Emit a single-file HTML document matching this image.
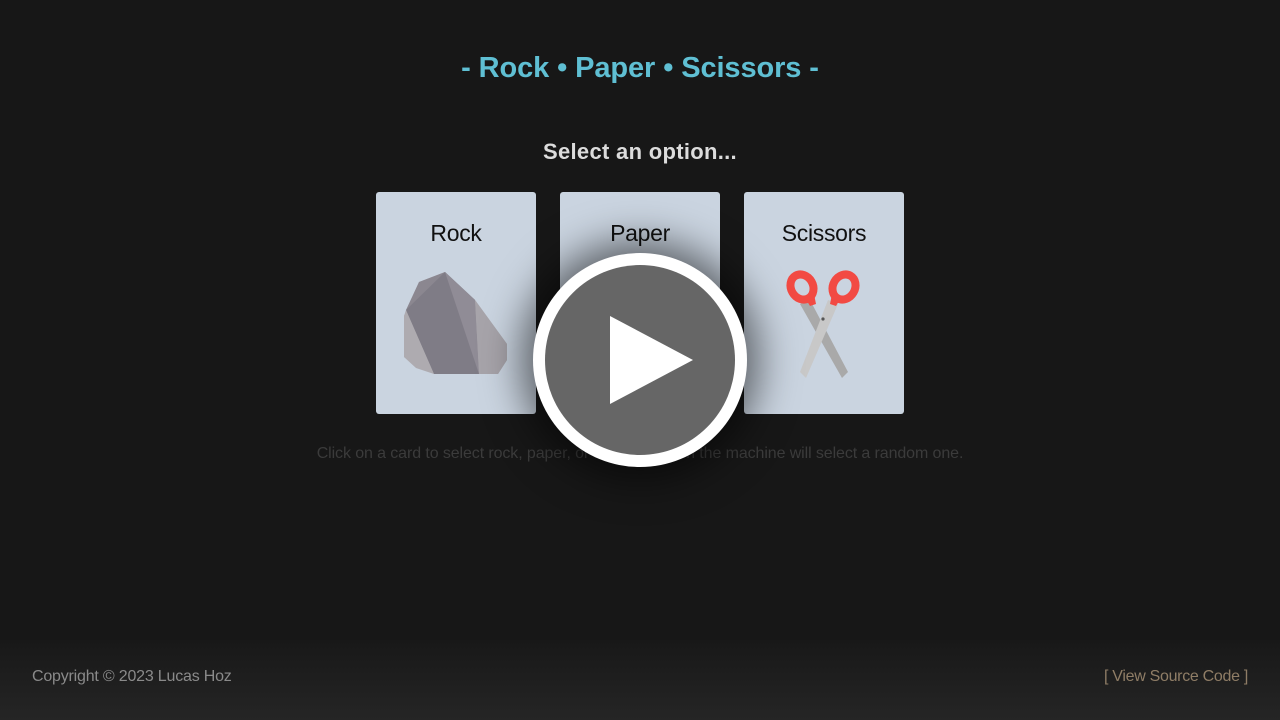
<!DOCTYPE html>
<html><head><meta charset="utf-8"><style>
html,body{margin:0;padding:0;width:1280px;height:720px;overflow:hidden;background:#171717;font-family:"Liberation Sans",sans-serif;position:relative}
.title{position:absolute;top:52px;left:0;width:1280px;text-align:center;color:#5fbfd3;font-weight:bold;font-size:29px;letter-spacing:-0.1px}
.sub{position:absolute;top:139px;left:0;width:1280px;text-align:center;color:#dcdcdc;font-weight:bold;font-size:22px;letter-spacing:0.3px}
.card{position:absolute;top:192px;width:160px;height:222px;background:#cad4e0;border-radius:3px}
.card .l{position:absolute;top:28px;width:100%;text-align:center;font-size:23px;color:#111;letter-spacing:-0.3px}
.hint{position:absolute;top:445px;left:0;width:1280px;text-align:center;color:#3b3b3b;font-size:16px;letter-spacing:-0.1px}
.foot{position:absolute;top:640px;left:0;width:1280px;height:80px;background:linear-gradient(#181818,#252525)}
.foot .a{position:absolute;left:32px;top:28px;color:#8a8a8a;font-size:16px;letter-spacing:-0.2px}
.foot .b{position:absolute;right:32px;top:28px;color:#8f7d66;font-size:16px;letter-spacing:-0.3px}
.play{position:absolute;left:533px;top:253px;width:214px;height:214px;border-radius:50%;background:#fff;box-shadow:0 0 40px 12px rgba(0,0,0,0.55)}
.play .in{position:absolute;left:12px;top:12px;width:190px;height:190px;border-radius:50%;background:#666}
</style></head><body>
<div class="title">- Rock • Paper • Scissors -</div>
<div class="sub">Select an option...</div>
<div class="card" style="left:376px"><div class="l">Rock</div>
<svg width="160" height="222" style="position:absolute;left:0;top:0">
<polygon points="69,80 99,108 131,152 131,168 122,182 58,182 28,165 28,124 43,90" fill="#a9a6ab"/>
<polygon points="69,80 43,90 30,118 58,182" fill="#8b8790"/>
<polygon points="69,80 99,108 103,182 58,182 30,118" fill="#7f7c86"/>
<polygon points="69,80 99,108 103,182" fill="#908c96"/>
<polygon points="99,108 131,152 131,168 122,182 103,182" fill="#a7a4aa"/>
<polygon points="30,118 58,182 40,176 28,165 28,124" fill="#aeabb0"/>
</svg></div>
<div class="card" style="left:560px"><div class="l">Paper</div></div>
<div class="card" style="left:744px"><div class="l">Scissors</div>
<svg width="160" height="222" style="position:absolute;left:0;top:0">
<polygon points="56,112 66,108 104,180 98,186" fill="#a9a9a9"/>
<polygon points="84,108 94,112 62,186 56,180" fill="#c8c8c8"/>
<circle cx="79" cy="127" r="1.6" fill="#555"/>
<ellipse cx="58" cy="95" rx="11" ry="13" fill="none" stroke="#f24a43" stroke-width="8" transform="rotate(-30 58 95)"/>
<ellipse cx="100" cy="95" rx="11" ry="13" fill="none" stroke="#f24a43" stroke-width="8" transform="rotate(30 100 95)"/>
<polygon points="60,104 70,102 72,112 66,114" fill="#f24a43"/>
<polygon points="98,104 88,102 86,112 92,114" fill="#f24a43"/>
</svg></div>
<div class="hint">Click on a card to select rock, paper, or scissors. Then the machine will select a random one.</div>
<div class="play"><div class="in"></div>
<svg width="214" height="214" style="position:absolute;left:0;top:0"><polygon points="77,63 160,107 77,151" fill="#fff"/></svg></div>
<div class="foot"><div class="a">Copyright © 2023 Lucas Hoz</div><div class="b">[ View Source Code ]</div></div>
</body></html>
